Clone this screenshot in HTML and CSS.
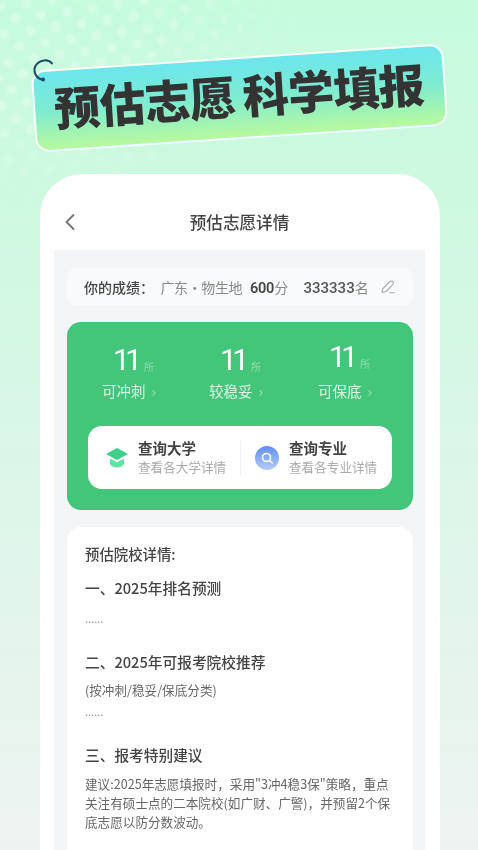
FILE: index.html
```html
<!DOCTYPE html>
<html lang="zh-CN">
<head>
<meta charset="utf-8">
<title>预估志愿详情</title>
<link rel="stylesheet" href="styles.css">
</head>
<body>
<div class="stage">
  <div class="dots"></div>
  <header class="hero">
    <div class="banner"><h1 class="banner-text">预估志愿 科学填报</h1></div>
    <svg class="ring" width="26" height="30" viewBox="0 0 26 30"><path d="M21 6.500C17.500 1.800 9 2.500 5 8c-3.500 5.500-.5 13 6 14.500" fill="none" stroke="#1f4a63" stroke-width="2" stroke-linecap="round"/><circle cx="12" cy="22.500" r="2" fill="#1f4a63"/></svg>
  </header>
  <main class="phone">
    <nav class="navbar">
      <svg class="back" width="12" height="18" viewBox="0 0 12 18"><path d="M9.500 2L2.500 9l7 7" fill="none" stroke="#777" stroke-width="2" stroke-linecap="round" stroke-linejoin="round"/></svg>
      <span class="nav-title">预估志愿详情</span>
    </nav>
    <div class="content">
      <section class="score">
        <span class="score-label">你的成绩：</span>
        <span class="score-region">广东·物生地</span>
        <span class="score-num">600<em>分</em></span>
        <span class="score-rank">333333<em>名</em></span>
        <svg class="edit" width="16" height="16" viewBox="0 0 16 16"><path d="M2 12.500L3 9.500 10 2.500c1-.8 2-.6 2.800.2s.9 1.800.2 2.600L6 12.500l-3.500.9zM9.500 13.700h5" fill="none" stroke="#aaa" stroke-width="1.100" stroke-linecap="round" stroke-linejoin="round"/></svg>
      </section>
      <section class="green">
        <div class="stats">
          <div class="stat"><div class="stat-top"><b>11</b><small>所</small></div><div class="stat-label">可冲刺<i>›</i></div></div>
          <div class="stat"><div class="stat-top"><b>11</b><small>所</small></div><div class="stat-label">较稳妥<i>›</i></div></div>
          <div class="stat"><div class="stat-top stat-top-raised"><b>11</b><small>所</small></div><div class="stat-label">可保底<i>›</i></div></div>
        </div>
        <div class="query">
          <div class="query-item">
            <svg class="q-icon" width="24" height="22" viewBox="0 0 24 22"><path d="M12 1L23 7l-11 6L1 7z" fill="#3fd08c"/><path d="M5 11.500l7 3.800 7-3.800V17c-1.500 2.500-4 3.500-7 3.500S6.500 19.500 5 17z" fill="#5fe3a6"/></svg>
            <div class="q-text"><strong>查询大学</strong><span>查看各大学详情</span></div>
          </div>
          <div class="query-item query-item-second">
            <svg class="q-icon" width="24" height="24" viewBox="0 0 24 24"><defs><linearGradient id="qb" x1="0" y1="0" x2="0" y2="1"><stop offset="0" stop-color="#5f8df0"/><stop offset="1" stop-color="#b5cbf8"/></linearGradient></defs><circle cx="12" cy="12" r="12" fill="url(#qb)"/><circle cx="11.500" cy="11.500" r="4" fill="none" stroke="#fff" stroke-width="1.600"/><path d="M14.500 14.500l2.800 2.500" stroke="#fff" stroke-width="1.600" stroke-linecap="round"/></svg>
            <div class="q-text"><strong>查询专业</strong><span>查看各专业详情</span></div>
          </div>
        </div>
      </section>
      <section class="detail">
        <h2 class="d-lead">预估院校详情:</h2>
        <h3 class="d-head d-head-first">一、2025年排名预测</h3>
        <p class="d-dots">......</p>
        <h3 class="d-head d-head-second">二、2025年可报考院校推荐</h3>
        <p class="d-sub">(按冲刺/稳妥/保底分类)</p>
        <p class="d-dots d-dots-tight">......</p>
        <h3 class="d-head d-head-third">三、报考特别建议</h3>
        <p class="d-para">建议:2025年志愿填报时，采用"3冲4稳3保"策略，重点关注有硕士点的二本院校(如广财、广警)，并预留2个保底志愿以防分数波动。</p>
      </section>
    </div>
  </main>
</div>
</body>
</html>
```

FILE: styles.css
```css
* { box-sizing: border-box; margin: 0; padding: 0; }
body {
  width: 478px;
  height: 850px;
  overflow: hidden;
  font-family: "Noto Sans CJK SC", "Noto Sans", sans-serif;
  color: #333;
}
.stage {
  position: relative;
  width: 478px;
  height: 850px;
  overflow: hidden;
  display: flex;
  flex-direction: column;
  background: linear-gradient(180deg, #c6fbde 0%, #cdf9e0 22%, #def6ea 60%, #eef3f1 100%);
  filter: blur(.35px);
}
.dots {
  position: absolute;
  left: -40px;
  top: -40px;
  width: 360px;
  height: 240px;
  background-image:
    radial-gradient(circle, rgba(255,255,255,.24) 0 4px, transparent 6.500px),
    radial-gradient(circle, rgba(255,255,255,.24) 0 4px, transparent 6.500px);
  background-size: 26px 28px;
  background-position: 0 0, 13px 14px;
  transform: rotate(-8deg);
  -webkit-mask-image: radial-gradient(ellipse at 25% 35%, #000 25%, transparent 70%);
  mask-image: radial-gradient(ellipse at 25% 35%, #000 25%, transparent 70%);
}
.hero {
  position: relative;
  height: 174px;
  flex: none;
  padding: 57px 0 0 33px;
}
.banner {
  width: 413px;
  height: 82px;
  border: 2px solid rgba(255,255,255,.9);
  border-radius: 14px;
  background: linear-gradient(180deg, #6ce6ee 0%, #7eecd0 50%, #b9f99e 100%);
  transform: rotate(-3.800deg);
  display: flex;
  align-items: center;
  padding: 0 0 8px 19px;
}
.banner-text {
  font-size: 46px;
  font-weight: 900;
  line-height: 1;
  color: #333;
  white-space: nowrap;
  word-spacing: -2px;
  letter-spacing: -.7px;
}
.ring {
  position: absolute;
  left: 31px;
  top: 57px;
}
.phone {
  flex: 1;
  margin-left: 40px;
  margin-right: 38px;
  padding: 0 15px 0 14px;
  background: #fff;
  border-radius: 42px 42px 0 0;
  display: flex;
  flex-direction: column;
  min-height: 0;
}
.navbar {
  position: relative;
  height: 76px;
  flex: none;
  display: flex;
  align-items: center;
  justify-content: center;
  padding-top: 20px;
}
.back {
  position: absolute;
  left: 10px;
  top: 39px;
}
.nav-title {
  font-size: 16.600px;
  font-weight: 500;
  color: #444;
}
.content {
  flex: 1;
  min-height: 0;
  background: #f4f5f7;
  padding: 18px 12px 0 13px;
  overflow: hidden;
}
.score {
  height: 38px;
  display: flex;
  align-items: center;
  background: #f9fafb;
  border-radius: 10px;
  padding: 0 17px;
  font-size: 14px;
  white-space: nowrap;
}
.score em { font-style: normal; font-weight: 400; color: #888; }
.score-label { color: #444; font-weight: 500; width: 77px; }
.score-region { color: #888; width: 90px; letter-spacing: -.4px; }
.score-num { color: #444; font-weight: 600; font-family: Roboto, sans-serif; font-size: 14.500px; width: 54px; letter-spacing: -.2px; }
.score-num em, .score-rank em { font-family: "Noto Sans CJK SC", sans-serif; font-size: 14px; letter-spacing: 0; }
.score-rank { color: #555; font-weight: 500; font-family: Roboto, sans-serif; font-size: 15px; width: 77px; }
.edit { flex: none; }
.green {
  margin-top: 16px;
  height: 188px;
  background: #43c679;
  border-radius: 14px;
  padding: 21px;
}
.stats {
  display: grid;
  grid-template-columns: 107px 109px 1fr;
  margin: 0 -7px 0 14px;
  height: 83px;
}
.stat { color: #fff; }
.stat-top {
  height: 34px;
  display: flex;
  align-items: flex-end;
  padding-left: 11px;
}
.stat-top-raised { transform: translateY(-3px); }
.stat-top b {
  font-family: Roboto, sans-serif;
  font-weight: 400;
  font-size: 30px;
  line-height: 34px;
  letter-spacing: -4.500px;
  width: 31px;
}
.stat-top small {
  font-size: 10px;
  color: rgba(255,255,255,.38);
  line-height: 20px;
}
.stat-label {
  margin-top: 3px;
  font-size: 14.500px;
  line-height: 22px;
  color: rgba(255,255,255,.82);
  white-space: nowrap;
}
.stat-label i {
  font-style: normal;
  margin-left: 6px;
  color: rgba(255,255,255,.5);
}
.query {
  height: 63px;
  background: #fff;
  border-radius: 14px;
  display: flex;
  align-items: center;
}
.query-item {
  flex: none;
  width: 152px;
  display: flex;
  align-items: center;
  gap: 9px;
  padding-left: 17px;
  height: 34px;
}
.query-item-second {
  flex: 1;
  width: auto;
  border-left: 1px solid #f0f1f2;
  padding-left: 14px;
  gap: 10px;
}
.q-icon { flex: none; }
.q-text { display: flex; flex-direction: column; white-space: nowrap; }
.q-text strong {
  font-size: 14.500px;
  font-weight: 600;
  line-height: 18px;
  color: #444;
}
.q-text span {
  font-size: 12.600px;
  line-height: 20px;
  color: #aaa;
}
.detail {
  margin-top: 17px;
  height: 340px;
  background: #fff;
  border-radius: 14px 14px 0 0;
  padding: 17px 18px 0;
  color: #444;
}
.d-lead { font-size: 14.400px; font-weight: 500; line-height: 20px; }
.d-head { font-size: 14.700px; font-weight: 500; line-height: 22px; white-space: nowrap; }
.d-head-first { margin-top: 13px; }
.d-head-second { margin-top: 25px; }
.d-head-third { margin-top: 25px; }
.d-dots { font-size: 11px; line-height: 16px; color: #888; margin-top: 11px; }
.d-dots-tight { margin-top: 4px; }
.d-sub { font-size: 12.600px; line-height: 18px; color: #666; margin-top: 8px; }
.d-para { font-size: 12.600px; line-height: 19px; color: #666; margin-top: 8px; }
```
